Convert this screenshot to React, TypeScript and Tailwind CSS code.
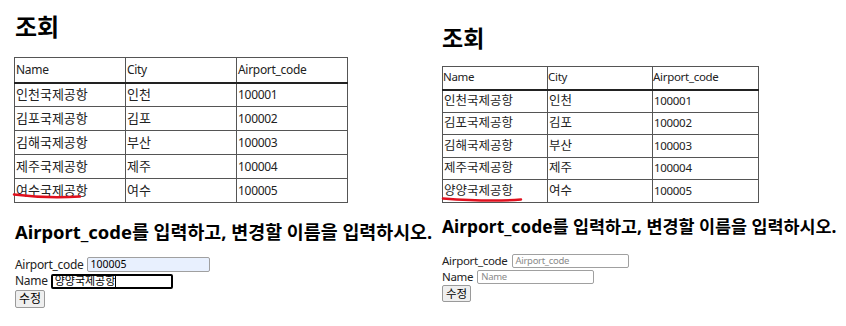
import React from "react";

const rows = [
  ["인천국제공항", "인천", "100001"],
  ["김포국제공항", "김포", "100002"],
  ["김해국제공항", "부산", "100003"],
  ["제주국제공항", "제주", "100004"],
];

const font = { fontFamily: '"Noto Sans", "Noto Sans CJK KR", sans-serif' };

const isLatin = (s: string) => /^[A-Za-z0-9_]+$/.test(s);

function Cell({ text, small }: { text: string; small?: boolean }) {
  if (isLatin(text)) {
    return (
      <span className={small ? "text-[11.5px] tracking-[-0.3px]" : "text-[12px] tracking-[-0.3px]"}>{text}</span>
    );
  }
  return <span>{text}</span>;
}

function LeftPanel() {
  const data = [...rows, ["여수국제공항", "여수", "100005"]];
  return (
    <div className="w-[429px] shrink-0 pl-[14px] pt-[12px]">
      <h1 className="text-[24px] font-bold leading-[30px] text-black ml-[1px]">조회</h1>
      <table className="mt-[15px] border-collapse border border-[#555] text-[13px] text-[#222]">
        <thead>
          <tr className="h-[25px]">
            {["Name", "City", "Airport_code"].map((h) => (
              <th key={h} className="w-[111px] border border-[#555] border-b-2 border-b-[#222] px-[1px] text-left font-normal">
                <Cell text={h} />
              </th>
            ))}
          </tr>
        </thead>
        <tbody>
          {data.map((r) => (
            <tr key={r[0]} className="h-[24px]">
              {r.map((c, i) => (
                <td key={i} className="border border-[#555] px-[1px]"><Cell text={c} /></td>
              ))}
            </tr>
          ))}
        </tbody>
      </table>
      <h2 className="mt-[17px] whitespace-nowrap text-[18.4px] font-bold leading-[24px] text-black ml-[1px]">
        Airport_code를 입력하고, 변경할 이름을 입력하시오.
      </h2>
      <div className="mt-[12px] ml-[1px] flex flex-col text-[12px] tracking-[-0.3px] text-[#222]">
        <div className="flex h-[17px] items-center gap-[3px]">
          <span>Airport_code</span>
          <div className="flex h-[15px] w-[123px] items-center rounded-[2px] border border-[#a0a0a0] bg-[#e8f0fe] px-[3px] text-[10.5px] tracking-normal text-black">100005</div>
        </div>
        <div className="flex h-[16px] items-center gap-[3px]">
          <span>Name</span>
          <div className="flex h-[15px] w-[122px] items-center rounded-[2px] border-2 border-black bg-white px-[2px] text-[11px] tracking-normal text-black">
            양양국제공항<span className="inline-block h-[12px] w-[1px] bg-black" />
          </div>
        </div>
        <div className="mt-[1px]">
          <div className="inline-flex h-[18px] w-[30px] items-center justify-center rounded-[2px] border border-[#9a9a9a] bg-[#efefef] text-[12px] tracking-normal text-black">수정</div>
        </div>
      </div>
    </div>
  );
}

function RightPanel() {
  const data = [...rows, ["양양국제공항", "여수", "100005"]];
  return (
    <div className="flex-1 pl-[13px] pt-[24px]">
      <h1 className="text-[23px] font-bold leading-[28px] text-black">조회</h1>
      <table className="mt-[14px] border-collapse border border-[#555] text-[12.5px] text-[#222]">
        <thead>
          <tr className="h-[23px]">
            {["Name", "City", "Airport_code"].map((h, i) => (
              <th key={h} className={`${i === 2 ? "w-[106px]" : "w-[105px]"} border border-[#555] border-b-2 border-b-[#222] px-0 text-left font-normal`}>
                <Cell text={h} small />
              </th>
            ))}
          </tr>
        </thead>
        <tbody>
          {data.map((r) => (
            <tr key={r[0]} className="h-[22.6px]">
              {r.map((c, i) => (
                <td key={i} className="border border-[#555] px-[1px]"><Cell text={c} small /></td>
              ))}
            </tr>
          ))}
        </tbody>
      </table>
      <h2 className="mt-[12px] whitespace-nowrap text-[17.4px] font-bold leading-[23px] text-black">
        Airport_code를 입력하고, 변경할 이름을 입력하시오.
      </h2>
      <div className="mt-[15px] flex flex-col text-[11.5px] tracking-[-0.3px] text-[#222]">
        <div className="flex h-[16px] items-center gap-[4px]">
          <span>Airport_code</span>
          <div className="flex h-[14px] w-[117px] items-center rounded-[2px] border border-[#a0a0a0] bg-white px-[3px] text-[9.5px] text-[#8a8a8a]">Airport_code</div>
        </div>
        <div className="flex h-[16px] items-center gap-[4px]">
          <span>Name</span>
          <div className="flex h-[14px] w-[117px] items-center rounded-[2px] border border-[#a0a0a0] bg-white px-[3px] text-[9.5px] text-[#8a8a8a]">Name</div>
        </div>
        <div>
          <div className="inline-flex h-[17px] w-[29px] items-center justify-center rounded-[2px] border border-[#9a9a9a] bg-[#efefef] text-[11.5px] tracking-normal text-black">수정</div>
        </div>
      </div>
    </div>
  );
}

export default function App() {
  return (
    <div className="relative flex h-[326px] w-[846px] overflow-hidden bg-white" style={font}>
      <LeftPanel />
      <RightPanel />
      <svg className="pointer-events-none absolute left-0 top-0" width="846" height="326">
        <path d="M14 194.5 Q45 198.5 80 196.5" stroke="#e0101e" strokeWidth="2.5" fill="none" strokeLinecap="round" />
        <path d="M443 198.5 Q490 202 521 199.5" stroke="#e0101e" strokeWidth="2.5" fill="none" strokeLinecap="round" />
      </svg>
    </div>
  );
}
